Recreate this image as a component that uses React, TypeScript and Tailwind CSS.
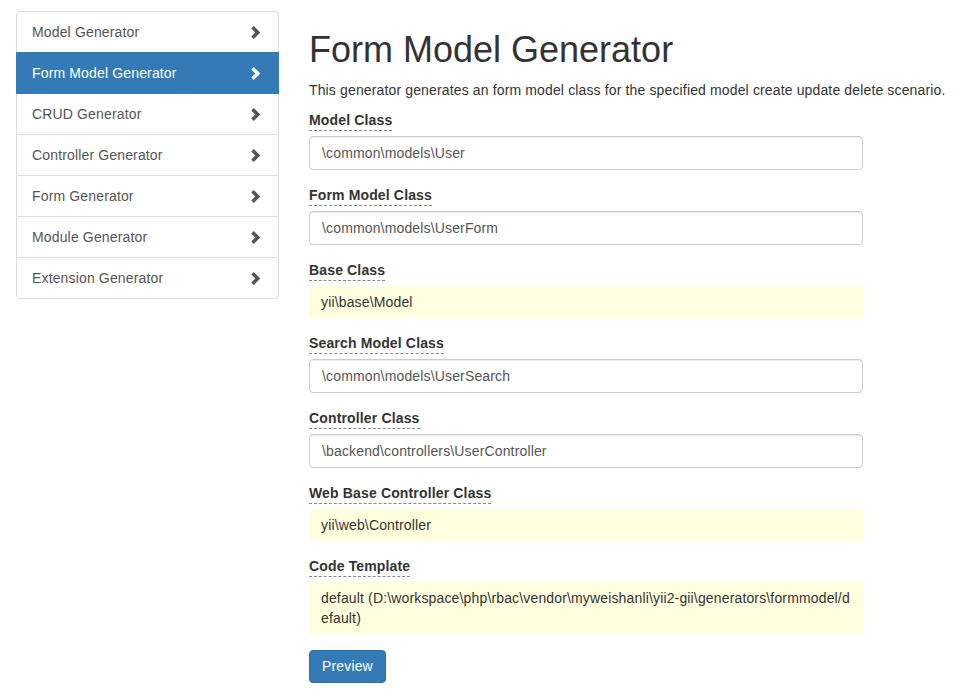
import React from "react";

const generators = [
  "Model Generator",
  "Form Model Generator",
  "CRUD Generator",
  "Controller Generator",
  "Form Generator",
  "Module Generator",
  "Extension Generator",
];

function Chevron({ active }: { active: boolean }) {
  return (
    <svg width="10" height="13" viewBox="0 0 10 13" className="mr-[2px]">
      <polygon
        points="0.3,2.5 2.8,0 9.3,6.5 2.8,13 0.3,10.5 4.3,6.5"
        fill={active ? "#ffffff" : "#555555"}
      />
    </svg>
  );
}

function Label({ children }: { children: React.ReactNode }) {
  return (
    <label className="mb-[5px] inline-block border-b border-dashed border-[#888] font-bold text-[#333]">
      {children}
    </label>
  );
}

function InputField({ label, value }: { label: string; value: string }) {
  return (
    <div className="mb-[15px]">
      <Label>{label}</Label>
      <input
        readOnly
        value={value}
        className="block h-[34px] w-full rounded-[4px] border border-[#ccc] bg-white px-3 py-[6px] text-[14px] tracking-[0.15px] text-[#555] shadow-[inset_0_1px_1px_rgba(0,0,0,0.075)] outline-none"
      />
    </div>
  );
}

function StickyField({ label, children }: { label: string; children: React.ReactNode }) {
  return (
    <div className="mb-[15px]">
      <Label>{label}</Label>
      <div className="bg-[#ffffe0] px-3 py-[6px] text-[#333] break-words">{children}</div>
    </div>
  );
}

export default function App() {
  return (
    <div className="flex min-h-[696px] bg-white pt-[11px] font-['Liberation_Sans',Arial,sans-serif] text-[14px] leading-[20px] tracking-[0.15px] text-[#333]">
      {/* sidebar */}
      <div className="ml-4 w-[263px] shrink-0">
        {generators.map((name, i) => {
          const active = name === "Form Model Generator";
          return (
            <a
              key={name}
              className={
                "relative -mb-px flex items-center justify-between border px-[15px] py-[10px] " +
                (i === 0 ? "rounded-t-[4px] " : "") +
                (i === generators.length - 1 ? "rounded-b-[4px] " : "") +
                (active
                  ? "z-10 border-[#337ab7] bg-[#337ab7] text-white"
                  : "border-[#ddd] bg-white text-[#555]")
              }
            >
              <span>{name}</span>
              <Chevron active={active} />
            </a>
          );
        })}
      </div>

      {/* main */}
      <div className="ml-[30px] min-w-0 flex-1">
        <h1 className="mb-[10px] mt-[19px] text-[36px] font-medium leading-[39.6px] tracking-normal text-[#333]">
          Form Model Generator
        </h1>
        <p className="mb-[10px] whitespace-nowrap tracking-[0.14px]">
          This generator generates an form model class for the specified model create update delete scenario.
        </p>

        <div className="w-[554px]">
          <InputField label="Model Class" value="\common\models\User" />
          <InputField label="Form Model Class" value="\common\models\UserForm" />
          <StickyField label="Base Class">yii\base\Model</StickyField>
          <InputField label="Search Model Class" value="\common\models\UserSearch" />
          <InputField label="Controller Class" value="\backend\controllers\UserController" />
          <StickyField label="Web Base Controller Class">yii\web\Controller</StickyField>
          <StickyField label="Code Template">
            default (D:\workspace\php\rbac\vendor\myweishanli\yii2-gii\generators\formmodel/d
            <br />
            efault)
          </StickyField>
          <button className="mt-[1px] h-[33px] rounded-[4px] border border-[#2e6da4] bg-[#337ab7] px-3 text-[14px] leading-[20px] text-white">
            Preview
          </button>
        </div>
      </div>
    </div>
  );
}
